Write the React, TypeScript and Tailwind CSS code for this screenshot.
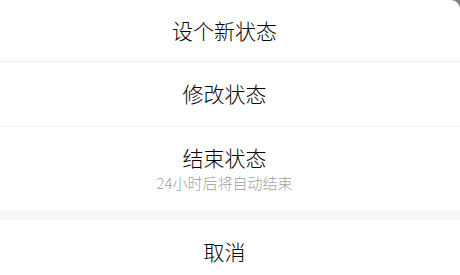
export default function App() {
  const font = { fontFamily: '"Noto Sans CJK SC", "Noto Sans", sans-serif' };
  return (
    <div className="w-[460px] h-[275px] overflow-hidden bg-[#808080]" style={font}>
      <div className="bg-white rounded-tr-[9px] flex flex-col font-light">
        <div className="h-[61px] flex items-center justify-center pr-[11px] text-[21px] text-[#050505]">设个新状态</div>
        <div className="h-px bg-[#f0f0f0]" />
        <div className="h-[64px] flex items-center justify-center pr-[11px] text-[21px] text-[#050505]">修改状态</div>
        <div className="h-px bg-[#f0f0f0]" />
        <div className="h-[83px] flex flex-col items-center justify-center pr-[11px]">
          <div className="text-[21px] leading-[27px] text-[#050505]">结束状态</div>
          <div className="text-[15px] leading-[20px] text-[#9f9f9f] mt-[2px]">24小时后将自动结束</div>
        </div>
        <div className="h-[10px] bg-[#f7f7f7]" />
        <div className="h-[64px] flex items-center justify-center pr-[11px] text-[21px] text-[#050505]">取消</div>
      </div>
    </div>
  );
}
